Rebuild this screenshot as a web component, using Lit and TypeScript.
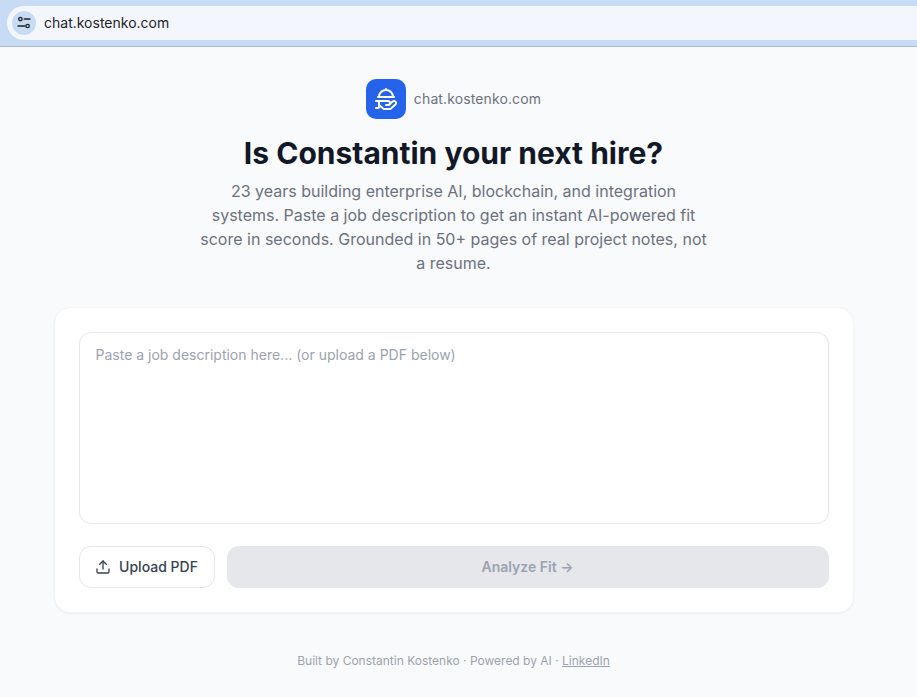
import { LitElement, html, css } from "lit";
import { customElement } from "lit/decorators.js";

@customElement("app-root")
export class AppRoot extends LitElement {
  static styles = css`
    :host { display: block; min-height: 697px; background: #f9fafb; font-family: Inter, "Liberation Sans", sans-serif; color: #111827; overflow: hidden; }
    .chrome { height: 47px; box-sizing: border-box; background: #c7dbf5; border-bottom: 1px solid #a9b9d4; padding: 6px 0 6px 7px; display: flex; }
    .omnibox { flex: 1; display: flex; align-items: center; gap: 8px; background: #f3f7fd; border-radius: 17px 0 0 17px; padding-left: 5px; font-size: 14px; line-height: 32px; color: #1f2328; }
    .tune { width: 24px; height: 24px; border-radius: 50%; background: #c7dbf5; display: flex; align-items: center; justify-content: center; }
    .page { display: flex; flex-direction: column; align-items: center; padding: 32px 10px 0 0; }
    .brand { display: flex; align-items: center; gap: 8px; font-size: 14px; letter-spacing: 0.12px; color: #6b7280; }
    .brand-name { margin-bottom: 2px; }
    .logo { width: 40px; height: 40px; border-radius: 10px; background: #2563eb; display: flex; align-items: center; justify-content: center; }
    h1 { margin: 16px 0 0; font-size: 30px; line-height: 36px; font-weight: 700; color: #111827; }
    .lead { margin: 8px 0 0; width: 512px; font-size: 16px; line-height: 24px; color: #6b7280; text-align: center; }
    .card { box-sizing: border-box; margin-top: 32px; width: 800px; height: 306px; background: #fff; border: 1px solid #f3f4f6; border-radius: 16px; box-shadow: 0 1px 2px rgba(0,0,0,.05); padding: 24px; display: flex; flex-direction: column; gap: 22px; }
    textarea { display: block; box-sizing: border-box; width: 100%; height: 192px; border: 1px solid #e5e7eb; border-radius: 12px; padding: 12px 16px; font: 14px/20px Inter, sans-serif; resize: none; outline: none; background: #fff; }
    textarea::placeholder { color: #9ca3af; opacity: 1; }
    .row { display: flex; gap: 12px; }
    button { font-family: inherit; font-size: 14px; height: 42px; border-radius: 12px; display: flex; align-items: center; justify-content: center; padding: 0; }
    button span { margin-bottom: 2px; }
    .upload { width: 136px; flex: none; gap: 8px; background: #fff; border: 1px solid #e5e7eb; color: #374151; font-weight: 450; }
    .go { flex: 1; background: #e5e7eb; border: 0; color: #9ca3af; font-weight: 600; }
    footer { margin-top: 40px; font-size: 12px; line-height: 16px; color: #9ca3af; }
    footer a { color: inherit; text-decoration: underline; }
  `;
  render() {
    return html`
      <div class="chrome"><div class="omnibox">
        <span class="tune"><svg width="16" height="16" viewBox="0 0 16 16" fill="none" stroke="#1f2328" stroke-width="1.3" stroke-linecap="round"><circle cx="4.4" cy="4" r="1.7"/><path d="M8.2 4H14M2 11h7"/><circle cx="11.6" cy="11" r="1.7"/></svg></span>
        chat.kostenko.com
      </div></div>
      <main class="page">
        <div class="brand"><span class="logo"><svg width="24" height="24" viewBox="0 0 24 24" fill="none" stroke="#fff" stroke-width="2" stroke-linecap="round" stroke-linejoin="round"><path d="M12 3V2"/><path d="m15.4 17.4 3.2-2.8a2 2 0 1 1 2.8 2.9l-3.6 3.3c-.7.8-1.7 1.2-2.7 1.2h-4c-1.1 0-2.1-.4-2.8-1.2L5 18"/><path d="M2 14h12a2 2 0 0 1 0 4h-2"/><path d="M4 10h16"/><path d="M5 10a7 7 0 0 1 14 0"/><path d="M5 14v6a1 1 0 0 1-1 1H2"/></svg></span><span class="brand-name">chat.kostenko.com</span></div>
        <h1>Is Constantin your next hire?</h1>
        <p class="lead">23 years building enterprise AI, blockchain, and integration systems. Paste a job description to get an instant AI-powered fit score in seconds. Grounded in 50+ pages of real project notes, not a resume.</p>
        <section class="card">
          <textarea placeholder="Paste a job description here... (or upload a PDF below)"></textarea>
          <div class="row">
            <button class="upload"><svg width="16" height="16" viewBox="0 0 24 24" fill="none" stroke="currentColor" stroke-width="2" stroke-linecap="round" stroke-linejoin="round"><path d="M21 15v4a2 2 0 0 1-2 2H5a2 2 0 0 1-2-2v-4"/><path d="M17 8l-5-5-5 5"/><path d="M12 3v12"/></svg><span>Upload PDF</span></button>
            <button class="go" disabled><span>Analyze Fit →</span></button>
          </div>
        </section>
        <footer>Built by Constantin Kostenko · Powered by AI · <a href="#">LinkedIn</a></footer>
      </main>`;
  }
}
